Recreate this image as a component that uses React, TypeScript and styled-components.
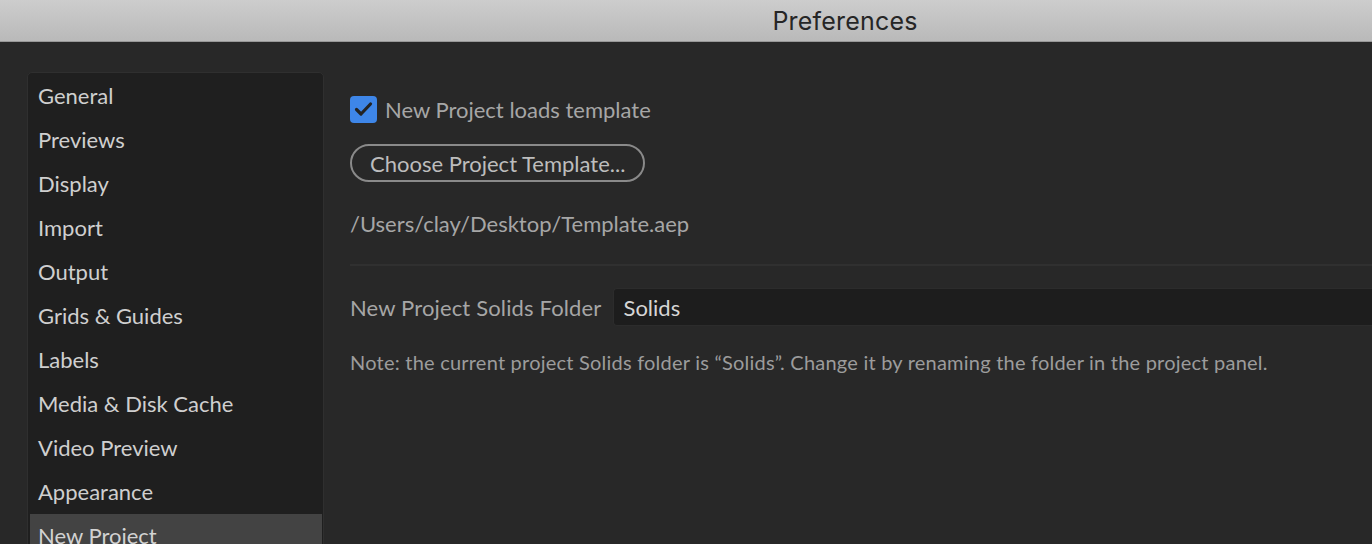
import React from "react";
import styled, { createGlobalStyle } from "styled-components";

const GlobalStyle = createGlobalStyle`
  html, body {
    margin: 0;
    padding: 0;
    background: #282828;
    overflow: hidden;
  }
  * {
    box-sizing: border-box;
  }
`;

const Window = styled.div`
  width: 1372px;
  height: 544px;
  overflow: hidden;
  background: #282828;
  font-family: Lato, "Noto Sans", sans-serif;
`;

const TitleBar = styled.div`
  display: flex;
  align-items: center;
  justify-content: center;

  height: 42px;
  /* the real window is wider than the shot, so its centre sits to the right */
  padding-left: 318px;

  background: linear-gradient(#cdcdcd, #b9b9b9);
  border-bottom: 1px solid #989898;

  color: #262626;
  font-family: Inter, Roboto, sans-serif;
  font-size: 25px;
  letter-spacing: 0.2px;
`;

const Body = styled.div`
  display: flex;
  align-items: flex-start;
  padding: 30px 0 0 27px;
`;

const Sidebar = styled.ul`
  flex: 0 0 297px;
  height: 520px;
  margin: 0;
  padding: 1px 1px 0 2px;
  list-style: none;

  background: #1f1f1f;
  border: 1px solid #2f2f2f;
  border-radius: 5px;
`;

const SidebarItem = styled.li<{ selected?: boolean }>`
  display: flex;
  align-items: center;

  height: 44px;
  padding-left: 8px;
  padding-bottom: 1px;

  background: ${(props) => (props.selected ? "#434343" : "transparent")};
  color: ${(props) => (props.selected ? "#d2d2d2" : "#cfcfcf")};

  font-size: 22px;
`;

const Content = styled.div`
  flex: 1;
  min-width: 0;
  padding: 24px 0 0 26px;

  color: #a6a6a6;
  font-size: 22px;
`;

const CheckRow = styled.label`
  display: flex;
  align-items: center;
  gap: 8px;
  height: 27px;
`;

const CheckBox = styled.span`
  display: flex;
  align-items: center;
  justify-content: center;

  width: 27px;
  height: 27px;

  background: #3e86e8;
  border-radius: 4px;
`;

const PillButton = styled.button`
  display: flex;
  align-items: center;

  height: 38px;
  margin-top: 21px;
  padding: 0 18px;

  background: transparent;
  border: 2px solid #8a8a8a;
  border-radius: 19px;

  color: #bdbdbd;
  font: inherit;
`;

const PathText = styled.div`
  margin-top: 28px;
  line-height: 28px;
`;

const Divider = styled.hr`
  height: 2px;
  margin: 26px 0 0;
  border: none;
  background: #303030;
`;

const FieldRow = styled.div`
  display: flex;
  align-items: center;
  gap: 11px;
  margin-top: 22px;
  letter-spacing: 0.15px;
`;

const TextField = styled.div`
  display: flex;
  align-items: center;
  flex: 1;

  height: 38px;
  padding-left: 10px;

  background: #1d1d1d;
  border: 1px solid #2c2c2c;
  border-right: none;
  border-radius: 4px 0 0 4px;

  color: #d6d6d6;
  letter-spacing: 0;
`;

const Note = styled.div`
  margin-top: 24px;
  color: #9c9c9c;
  font-size: 20px;
  letter-spacing: 0.22px;
`;

const sections = [
  "General",
  "Previews",
  "Display",
  "Import",
  "Output",
  "Grids & Guides",
  "Labels",
  "Media & Disk Cache",
  "Video Preview",
  "Appearance",
  "New Project",
];

const Check = () => (
  <svg width="19" height="17" viewBox="0 0 19 17">
    <path
      d="M2.5 8.5 L7 13 L16.5 3"
      fill="none"
      stroke="#232323"
      strokeWidth="3.2"
      strokeLinecap="round"
      strokeLinejoin="round"
    />
  </svg>
);

export default function App() {
  return (
    <Window>
      <GlobalStyle />
      <TitleBar>Preferences</TitleBar>
      <Body>
        <Sidebar>
          {sections.map((name) => (
            <SidebarItem key={name} selected={name === "New Project"}>
              {name}
            </SidebarItem>
          ))}
        </Sidebar>
        <Content>
          <CheckRow>
            <CheckBox>
              <Check />
            </CheckBox>
            New Project loads template
          </CheckRow>
          <PillButton>Choose Project Template...</PillButton>
          <PathText>/Users/clay/Desktop/Template.aep</PathText>
          <Divider />
          <FieldRow>
            New Project Solids Folder
            <TextField>Solids</TextField>
          </FieldRow>
          <Note>
            Note: the current project Solids folder is “Solids”. Change it by
            renaming the folder in the project panel.
          </Note>
        </Content>
      </Body>
    </Window>
  );
}
